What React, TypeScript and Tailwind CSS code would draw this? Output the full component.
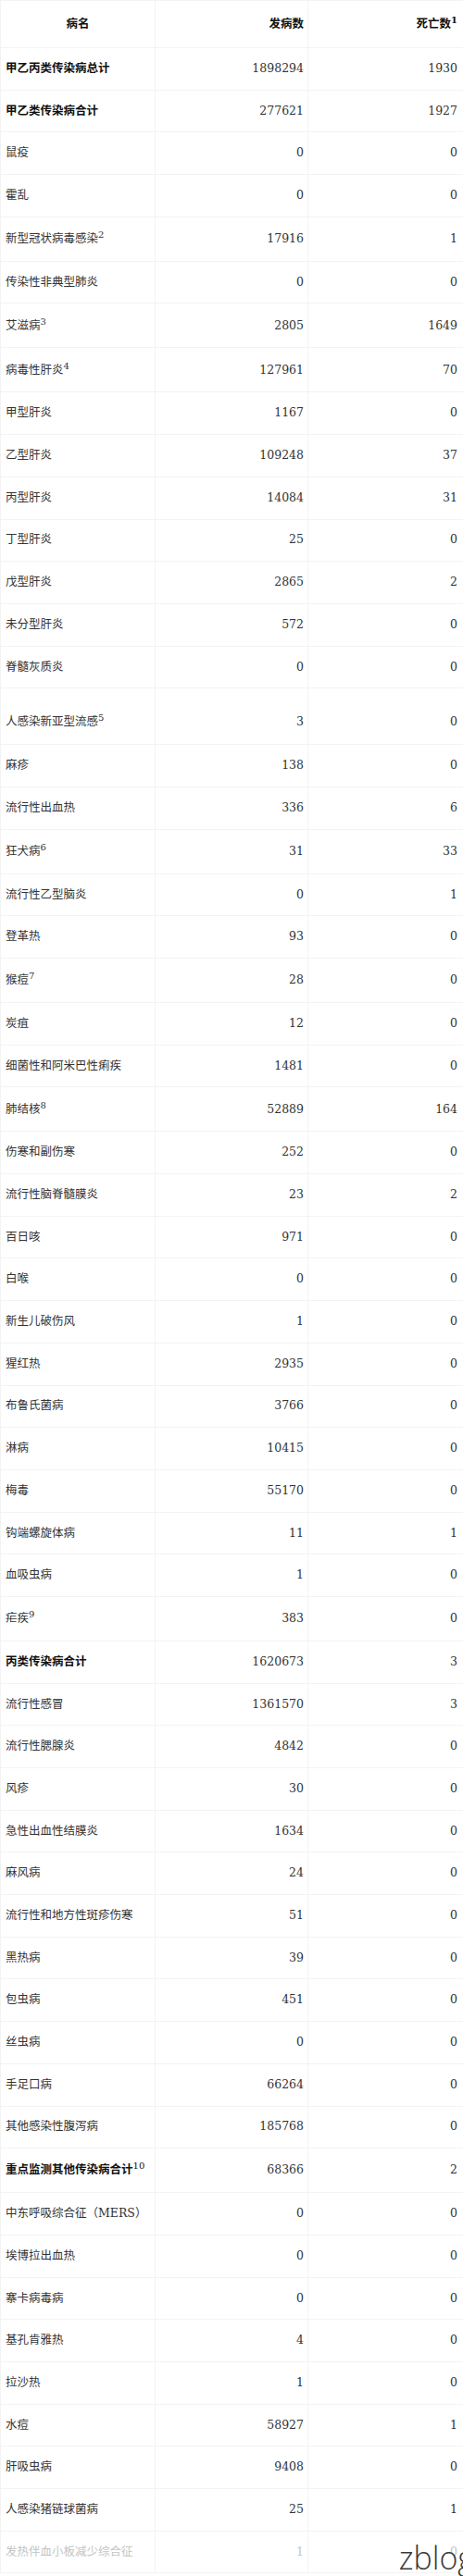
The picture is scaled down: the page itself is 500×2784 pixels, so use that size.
type Row = {
  name: string
  sup?: string
  cases: string
  deaths: string
  bold?: boolean
  tall?: boolean
}

const rows: Row[] = [
  { name: "甲乙丙类传染病总计", cases: "1898294", deaths: "1930", bold: true },
  { name: "甲乙类传染病合计", cases: "277621", deaths: "1927", bold: true },
  { name: "鼠疫", cases: "0", deaths: "0" },
  { name: "霍乱", cases: "0", deaths: "0" },
  { name: "新型冠状病毒感染", sup: "2", cases: "17916", deaths: "1" },
  { name: "传染性非典型肺炎", cases: "0", deaths: "0" },
  { name: "艾滋病", sup: "3", cases: "2805", deaths: "1649" },
  { name: "病毒性肝炎", sup: "4", cases: "127961", deaths: "70" },
  { name: "甲型肝炎", cases: "1167", deaths: "0" },
  { name: "乙型肝炎", cases: "109248", deaths: "37" },
  { name: "丙型肝炎", cases: "14084", deaths: "31" },
  { name: "丁型肝炎", cases: "25", deaths: "0" },
  { name: "戊型肝炎", cases: "2865", deaths: "2" },
  { name: "未分型肝炎", cases: "572", deaths: "0" },
  { name: "脊髓灰质炎", cases: "0", deaths: "0" },
  { name: "人感染新亚型流感", sup: "5", cases: "3", deaths: "0", tall: true },
  { name: "麻疹", cases: "138", deaths: "0" },
  { name: "流行性出血热", cases: "336", deaths: "6" },
  { name: "狂犬病", sup: "6", cases: "31", deaths: "33" },
  { name: "流行性乙型脑炎", cases: "0", deaths: "1" },
  { name: "登革热", cases: "93", deaths: "0" },
  { name: "猴痘", sup: "7", cases: "28", deaths: "0" },
  { name: "炭疽", cases: "12", deaths: "0" },
  { name: "细菌性和阿米巴性痢疾", cases: "1481", deaths: "0" },
  { name: "肺结核", sup: "8", cases: "52889", deaths: "164" },
  { name: "伤寒和副伤寒", cases: "252", deaths: "0" },
  { name: "流行性脑脊髓膜炎", cases: "23", deaths: "2" },
  { name: "百日咳", cases: "971", deaths: "0" },
  { name: "白喉", cases: "0", deaths: "0" },
  { name: "新生儿破伤风", cases: "1", deaths: "0" },
  { name: "猩红热", cases: "2935", deaths: "0" },
  { name: "布鲁氏菌病", cases: "3766", deaths: "0" },
  { name: "淋病", cases: "10415", deaths: "0" },
  { name: "梅毒", cases: "55170", deaths: "0" },
  { name: "钩端螺旋体病", cases: "11", deaths: "1" },
  { name: "血吸虫病", cases: "1", deaths: "0" },
  { name: "疟疾", sup: "9", cases: "383", deaths: "0" },
  { name: "丙类传染病合计", cases: "1620673", deaths: "3", bold: true },
  { name: "流行性感冒", cases: "1361570", deaths: "3" },
  { name: "流行性腮腺炎", cases: "4842", deaths: "0" },
  { name: "风疹", cases: "30", deaths: "0" },
  { name: "急性出血性结膜炎", cases: "1634", deaths: "0" },
  { name: "麻风病", cases: "24", deaths: "0" },
  { name: "流行性和地方性斑疹伤寒", cases: "51", deaths: "0" },
  { name: "黑热病", cases: "39", deaths: "0" },
  { name: "包虫病", cases: "451", deaths: "0" },
  { name: "丝虫病", cases: "0", deaths: "0" },
  { name: "手足口病", cases: "66264", deaths: "0" },
  { name: "其他感染性腹泻病", cases: "185768", deaths: "0" },
  { name: "重点监测其他传染病合计", sup: "10", cases: "68366", deaths: "2", bold: true },
  { name: "中东呼吸综合征（MERS）", cases: "0", deaths: "0" },
  { name: "埃博拉出血热", cases: "0", deaths: "0" },
  { name: "寨卡病毒病", cases: "0", deaths: "0" },
  { name: "基孔肯雅热", cases: "4", deaths: "0" },
  { name: "拉沙热", cases: "1", deaths: "0" },
  { name: "水痘", cases: "58927", deaths: "1" },
  { name: "肝吸虫病", cases: "9408", deaths: "0" },
  { name: "人感染猪链球菌病", cases: "25", deaths: "1" },
  { name: "发热伴血小板减少综合征", cases: "1", deaths: "0" },
]

export default function App() {
  return (
    <div className="relative w-[500px] h-[2784px] overflow-hidden bg-white font-['DejaVu_Serif','Noto_Sans_CJK_SC',serif] text-[12.5px] text-[#333]">
      <table className="w-full table-fixed border-collapse">
        <colgroup>
          <col className="w-[167px]" />
          <col className="w-[165px]" />
          <col className="w-[168px]" />
        </colgroup>
        <thead>
          <tr className="h-[51px] text-[#111]">
            <th className="border border-[#f3f3f3] px-[5px] text-center font-bold">病名</th>
            <th className="border border-[#f3f3f3] px-[4px] text-right font-bold">发病数</th>
            <th className="border border-[#f3f3f3] px-[6px] text-right font-bold">
              死亡数<sup className="text-[10px]">1</sup>
            </th>
          </tr>
        </thead>
        <tbody>
          {rows.map((r, i) => {
            const last = i === rows.length - 1
            const h = r.tall ? "h-[61px]" : r.sup ? "h-[48px]" : "h-[45.7px]"
            return (
              <tr key={r.name} className={`${h} ${last ? "text-[#c4c4c4]" : ""}`}>
                <td
                  className={`border border-[#f3f3f3] px-[5px] whitespace-nowrap ${r.tall ? "pt-[12px]" : ""} ${
                    r.bold ? "font-bold text-[#111]" : ""
                  }`}
                >
                  {r.name}
                  {r.sup && <sup className="text-[10px] font-normal">{r.sup}</sup>}
                </td>
                <td className={`border border-[#f3f3f3] px-[4px] text-right ${r.tall ? "pt-[12px]" : ""}`}>
                  {r.cases}
                </td>
                <td className={`border border-[#f3f3f3] px-[6px] text-right ${r.tall ? "pt-[12px]" : ""}`}>
                  {r.deaths}
                </td>
              </tr>
            )
          })}
        </tbody>
      </table>
      {/* watermark */}
      <div className="absolute right-[-12px] bottom-[3px] font-['Open_Sans',sans-serif] font-light text-[34px] leading-none text-[#3a3a3a]">
        zblog
      </div>
    </div>
  )
}
